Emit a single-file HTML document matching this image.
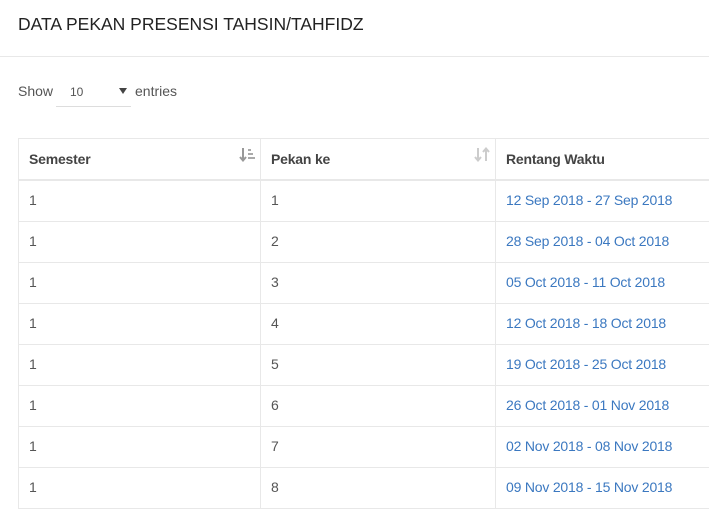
<!DOCTYPE html>
<html><head><style>
body{margin:0;width:709px;height:509px;overflow:hidden;background:#fff;font-family:"Liberation Sans",sans-serif;color:#555;font-size:14px}
.title{position:absolute;left:18px;top:14px;font-size:17.5px;color:#222}
.hr{position:absolute;left:0;top:56px;width:709px;height:1px;background:#e8e8e8}
.show{position:absolute;left:18px;top:83px}
.sel{position:absolute;left:56px;top:83px;width:75px;height:23px;border-bottom:1px solid #ddd;font-size:12px}
.sel span{position:absolute;left:14px;top:2px}
.sel svg{position:absolute;left:63px;top:5px}
.ent{position:absolute;left:135px;top:83px}
table{position:absolute;left:18px;top:138px;border-collapse:collapse;width:720px}
td,th{border:1px solid #e8e8e8;height:40px;padding:0 0 0 10px;text-align:left;vertical-align:middle;letter-spacing:-0.2px}
td span{position:relative;top:-1px}
th{height:40px;font-weight:bold;color:#444;border-bottom:2px solid #e8e8e8;position:relative}
td a{color:#3b78c0;text-decoration:none;position:relative;top:-1px}
.ic{position:absolute;right:5px;top:8px}
</style></head><body>
<div class="title">DATA PEKAN PRESENSI TAHSIN/TAHFIDZ</div>
<div class="hr"></div>
<div class="show">Show</div>
<div class="sel"><span>10</span><svg width="8" height="6"><path d="M0 0H8L4 6Z" fill="#444"/></svg></div>
<div class="ent">entries</div>
<table>
<tr><th style="width:231px">Semester<svg class="ic" width="16" height="15"><path d="M4 1V13M1 10L4 13.5L7 10" stroke="#999" stroke-width="2" fill="none"/><rect x="9" y="2" width="3" height="2" fill="#aaa"/><rect x="9" y="6" width="5" height="2" fill="#aaa"/><rect x="9" y="10" width="7" height="2" fill="#aaa"/></svg></th><th style="width:224px">Pekan ke<svg class="ic" width="16" height="15"><path d="M4 1V13M1 10L4 13.5L7 10M12 14V2M9 5L12 1.5L15 5" stroke="#ccc" stroke-width="2" fill="none"/></svg></th><th>Rentang Waktu</th></tr>
<tr><td><span>1</span></td><td><span>1</span></td><td><a>12 Sep 2018 - 27 Sep 2018</a></td></tr>
<tr><td><span>1</span></td><td><span>2</span></td><td><a>28 Sep 2018 - 04 Oct 2018</a></td></tr>
<tr><td><span>1</span></td><td><span>3</span></td><td><a>05 Oct 2018 - 11 Oct 2018</a></td></tr>
<tr><td><span>1</span></td><td><span>4</span></td><td><a>12 Oct 2018 - 18 Oct 2018</a></td></tr>
<tr><td><span>1</span></td><td><span>5</span></td><td><a>19 Oct 2018 - 25 Oct 2018</a></td></tr>
<tr><td><span>1</span></td><td><span>6</span></td><td><a>26 Oct 2018 - 01 Nov 2018</a></td></tr>
<tr><td><span>1</span></td><td><span>7</span></td><td><a>02 Nov 2018 - 08 Nov 2018</a></td></tr>
<tr><td><span>1</span></td><td><span>8</span></td><td><a>09 Nov 2018 - 15 Nov 2018</a></td></tr>
</table>
</body></html>
